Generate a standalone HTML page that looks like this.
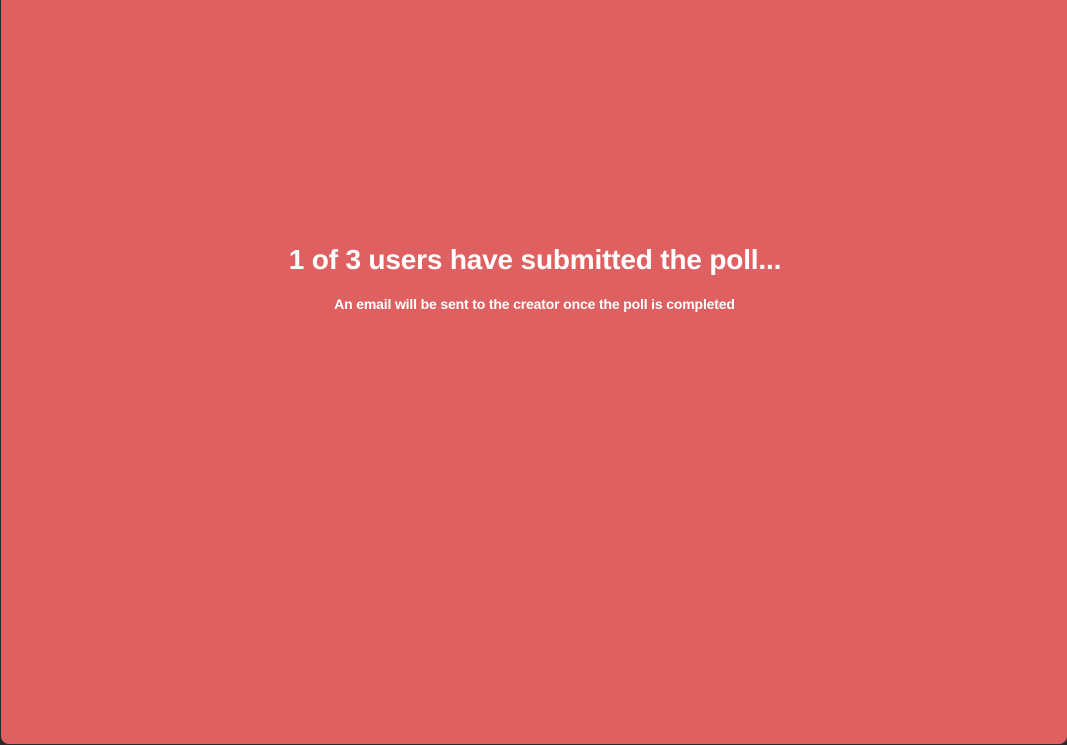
<!DOCTYPE html>
<html><head><style>
html,body{margin:0;width:1067px;height:745px;background:#2a2a2a;overflow:hidden}
.card{position:absolute;left:1px;top:0;width:1066px;height:744px;background:#df6061;border-radius:0 0 8px 8px}
h1{position:absolute;left:2px;right:0;top:242px;margin:0;text-align:center;color:#fff;font:bold 28px/36px "Liberation Sans",sans-serif;letter-spacing:-0.18px}
p{position:absolute;left:1px;right:0;top:295px;margin:0;text-align:center;color:#fff;font:bold 14px/18px "Liberation Sans",sans-serif;letter-spacing:-0.16px}
</style></head><body>
<div class="card">
<h1>1 of 3 users have submitted the poll...</h1>
<p>An email will be sent to the creator once the poll is completed</p>
</div>
</body></html>
